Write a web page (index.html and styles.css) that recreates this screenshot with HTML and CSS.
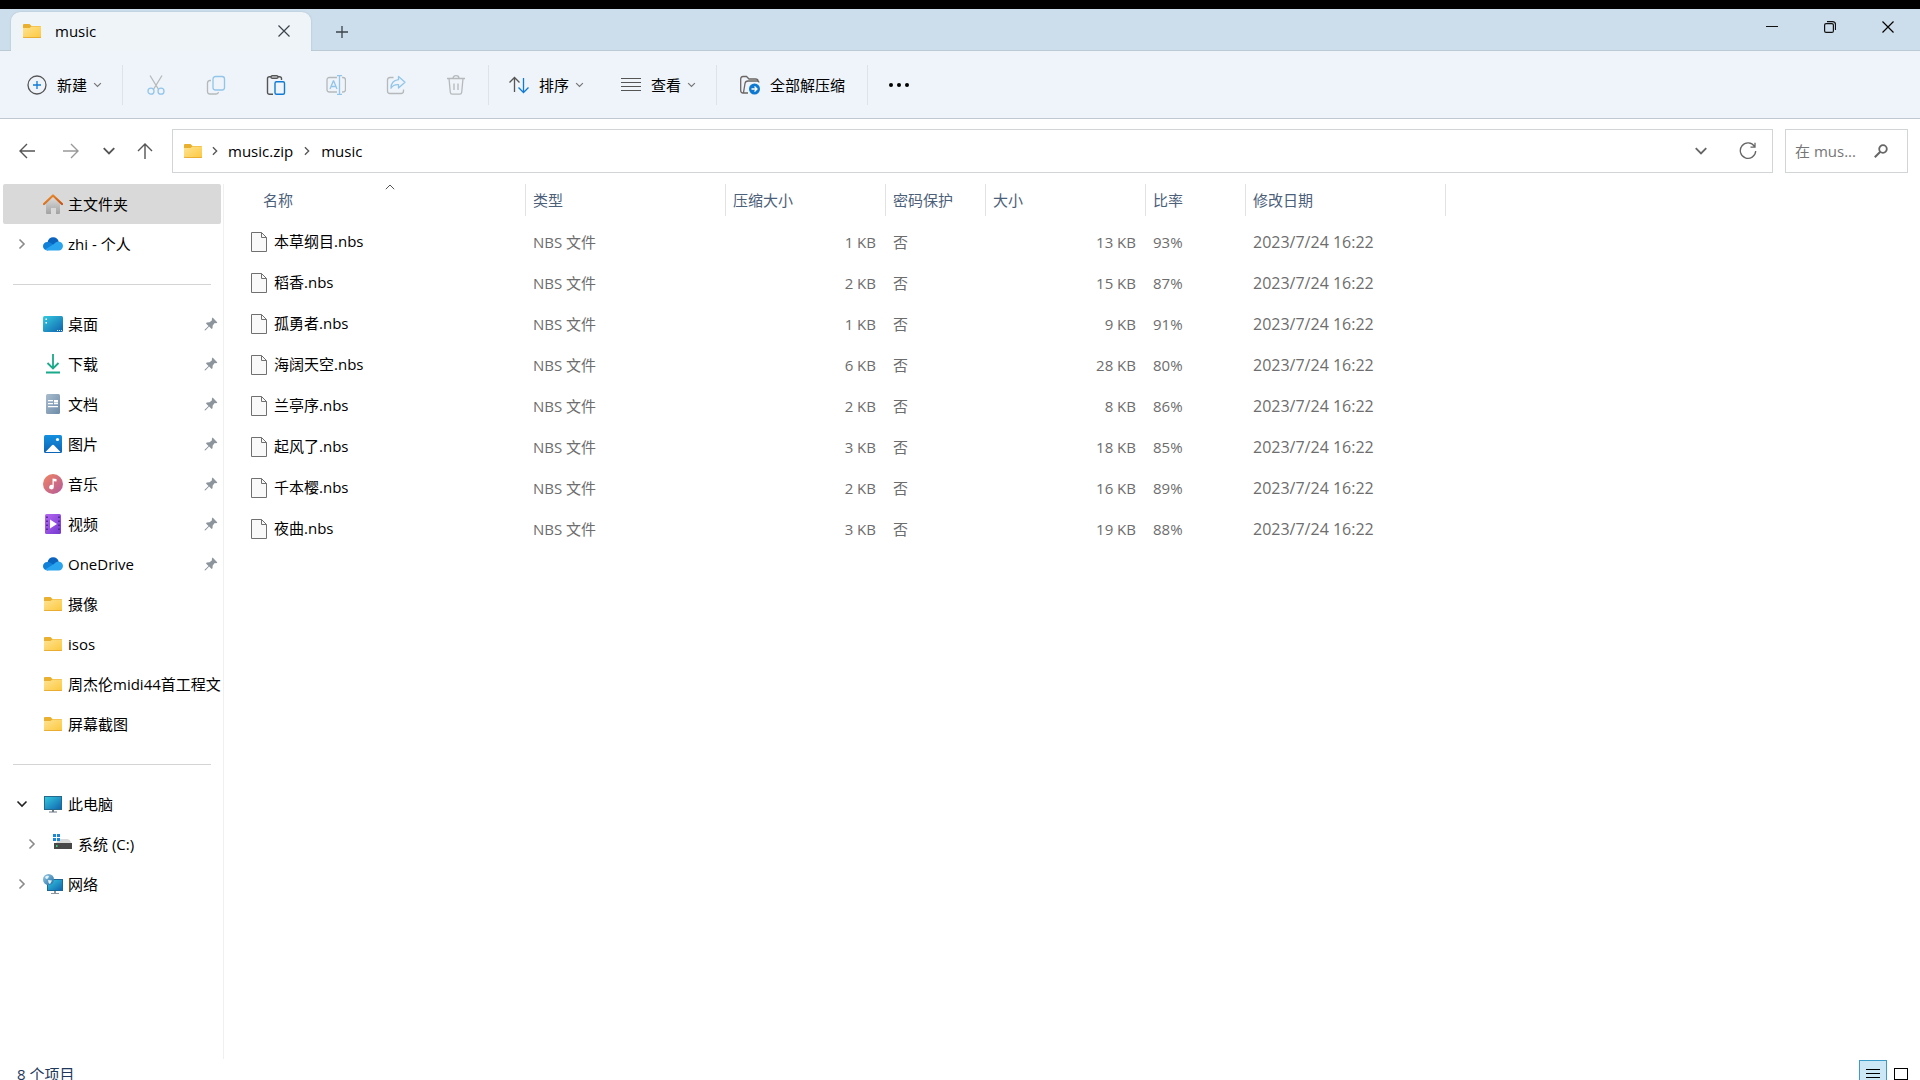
FILE: index.html
```html
<!DOCTYPE html>
<html lang="zh-CN">
<head>
  <meta charset="UTF-8">
  <meta name="viewport" content="width=device-width, initial-scale=1.0">
  <title>music</title>
  <link rel="stylesheet" href="styles.css">
</head>
<body>
  <!-- 图标 -->
  <svg class="defs" width="0" height="0" aria-hidden="true">
    <defs>
      <linearGradient id="gFolder" x1="0" y1="0" x2="1" y2="1">
        <stop offset="0" stop-color="#ffe394"/><stop offset="1" stop-color="#fcc83c"/>
      </linearGradient>
      <linearGradient id="gScreen" x1="0" y1="0" x2="1" y2="1">
        <stop offset="0" stop-color="#35cbe0"/><stop offset="1" stop-color="#0f62ad"/>
      </linearGradient>
      <linearGradient id="gRoof" x1="0" y1="0" x2="1" y2="1">
        <stop offset="0" stop-color="#f0932b"/><stop offset="1" stop-color="#c8500f"/>
      </linearGradient>
      <linearGradient id="gWall" x1="0" y1="0" x2="0" y2="1">
        <stop offset="0" stop-color="#dcdcdc"/><stop offset="1" stop-color="#a2a2a2"/>
      </linearGradient>
      <linearGradient id="gDoc" x1="0" y1="0" x2="1" y2="1">
        <stop offset="0" stop-color="#a9bccd"/><stop offset="1" stop-color="#6d8ba8"/>
      </linearGradient>
      <linearGradient id="gPic" x1="0" y1="0" x2="0" y2="1">
        <stop offset="0" stop-color="#1490df"/><stop offset="1" stop-color="#0b63b5"/>
      </linearGradient>
      <linearGradient id="gMusic" x1="0" y1="0" x2="1" y2="1">
        <stop offset="0" stop-color="#f08560"/><stop offset="1" stop-color="#b35a9c"/>
      </linearGradient>
      <linearGradient id="gVideo" x1="0" y1="0" x2="1" y2="1">
        <stop offset="0" stop-color="#b568f0"/><stop offset="1" stop-color="#7438d0"/>
      </linearGradient>
      <linearGradient id="gGlobe" x1="0" y1="0" x2="1" y2="1">
        <stop offset="0" stop-color="#9ccbe4"/><stop offset="1" stop-color="#1d6fa8"/>
      </linearGradient>
    </defs>
    <symbol id="folder" viewBox="0 0 20 20">
      <path d="M1 4q0-1 1-1h5.500l2 2H18q1 0 1 1v4H1z" fill="#e9b02f"/>
      <path d="M1 7h6.500l2-1.500H19V16q0 1-1 1H2q-1 0-1-1z" fill="url(#gFolder)"/>
      <path d="M1 15.500V16q0 1 1 1h16q1 0 1-1v-.5q-.3.700-1 .700H2q-.7 0-1-.700z" fill="#e2a22a"/>
    </symbol>
    <symbol id="home" viewBox="0 0 20 20">
      <path d="M3 8.500 10 3l7 5.500V19q0 1-1 1h-3v-6H8v6H4q-1 0-1-1z" fill="url(#gWall)"/>
      <path d="M1 10 10 1.500 19 10" fill="none" stroke="url(#gRoof)" stroke-width="2.200" stroke-linecap="round" stroke-linejoin="round"/>
    </symbol>
    <symbol id="cloud" viewBox="0 0 20 20">
      <path d="M4.500 8.500C5 5 7.500 3.200 10.300 3.300c2.700 0 4.800 1.700 5.400 4.200L12 12z" fill="#0a63bd"/>
      <path d="M4.500 16.500A4.300 4.300 0 0 1 0 12.300 4.200 4.200 0 0 1 4.300 8c1.200-.1 2.300.2 3.200.8L14 13z" fill="#1080d8"/>
      <path d="M4.500 16.500 2 15.600l9-5.600c1.200-1.600 2.800-2.500 4.500-2.500 2.500.1 4.500 2 4.500 4.500s-2 4.500-4.300 4.500z" fill="#2ba4f0"/>
    </symbol>
    <symbol id="desktop" viewBox="0 0 20 20">
      <rect x="0" y="2" width="20" height="16" rx="1.500" fill="url(#gScreen)"/>
      <path d="M2.500 4.500h1.500v1.500H2.500zM2.500 8h1.500v1.500H2.500z" fill="#fff"/>
      <path d="M14 16h1v1h-1zM16 16h1v1h-1zM18 16h1v1h-1z" fill="#d5ecfa"/>
    </symbol>
    <symbol id="download" viewBox="0 0 20 20">
      <path d="M10 0v14M4.500 9 10 14.500 15.500 9M3 18.500h14" fill="none" stroke="#19a98b" stroke-width="1.800"/>
    </symbol>
    <symbol id="doc" viewBox="0 0 20 20">
      <rect x="3" y="0" width="14" height="20" rx="1.500" fill="url(#gDoc)"/>
      <path d="M5 6.700h5M5 9.700h5M5 12.700h10M11 9.700h4" stroke="#fff" stroke-width="1.300"/>
      <path d="M11 6h4v2.500h-4z" fill="#fff"/>
    </symbol>
    <symbol id="pic" viewBox="0 0 20 20">
      <rect x="1" y="1" width="18" height="18" rx="1.500" fill="url(#gPic)"/>
      <path d="M2.500 18 9 11.300q1-1 2 0L17.500 18z" fill="#fff"/>
      <circle cx="14.500" cy="5.500" r="1.600" fill="#fff"/>
    </symbol>
    <symbol id="music" viewBox="0 0 20 20">
      <circle cx="10" cy="10" r="10" fill="url(#gMusic)"/>
      <path d="M9.500 4.500 13.500 5v2.500l-2.700-.3V13a2.300 2.300 0 1 1-1.300-2z" fill="#fff"/>
    </symbol>
    <symbol id="video" viewBox="0 0 20 20">
      <rect x="2" y="0" width="16" height="20" rx="1.500" fill="url(#gVideo)"/>
      <path d="M7 5.500 14 10l-7 4.500z" fill="#fff"/>
      <path d="M4 2.500v16M16 2.500v16" stroke="#4a1d94" stroke-width="1.600" stroke-dasharray="1.600 2.400"/>
    </symbol>
    <symbol id="pc" viewBox="0 0 20 20">
      <rect x="1.500" y="2.500" width="17" height="13" fill="url(#gScreen)" stroke="#23698e"/>
      <path d="M9 16h2v1.500h3v1H6v-1h3z" fill="#6c7a84"/>
    </symbol>
    <symbol id="drive" viewBox="0 0 20 20">
      <path d="M3 9.500 5.500 5H14q2 0 3 1.500L19 10H1z" fill="#d9d9d9"/>
      <path d="M1 9h18v6H1z" fill="#484848"/>
      <path d="M3 11h1.500v2H3z" fill="#3fd07c"/>
      <path d="M0 0h3v3H0zM4 0h3v3H4zM0 4h3v3H0zM4 4h3v3H4z" fill="#1b87d6"/>
    </symbol>
    <symbol id="network" viewBox="0 0 20 20">
      <rect x="4.500" y="5.500" width="15" height="11" fill="url(#gScreen)" stroke="#1c6795"/>
      <path d="M11 17h2v2h3v1H8v-1h3z" fill="#8c969d"/>
      <circle cx="5.500" cy="5.500" r="5.500" fill="url(#gGlobe)"/>
      <path d="M2 3q2-2 4-1L5 4.500 3 5zM5 6l4 .5-2 3.500q-2-1-2-4z" fill="#e4f4fb"/>
    </symbol>
    <symbol id="file" viewBox="0 0 16 20">
      <path d="M.5.500h10l5 5v14H.5z" fill="#f9f9f9" stroke="#707070"/>
      <path d="M10.500.500v5h5" fill="none" stroke="#707070"/>
    </symbol>
    <symbol id="pin" viewBox="0 0 14 14">
      <path d="M8.600.6 13.400 5.400 12.200 6.200 10.700 6 8.700 8.400 8.500 11.300 7.600 12 5.100 9.500 1.600 13.200.5 13.500.800 12.400 4.500 8.900 2 6.400 2.700 5.500 5.600 5.300 8 3.300 7.800 1.800z" fill="#8d959c"/>
    </symbol>
    <symbol id="right" viewBox="0 0 10 12">
      <path d="m2.500 1.500 4.500 4.500-4.500 4.500" fill="none" stroke="currentColor" stroke-width="1.600"/>
    </symbol>
    <symbol id="down" viewBox="0 0 12 10">
      <path d="m1.500 2.500 4.500 4.500 4.500-4.500" fill="none" stroke="currentColor" stroke-width="1.600"/>
    </symbol>
    <symbol id="cross" viewBox="0 0 12 12">
      <path d="m.5.500 11 11m0-11-11 11" fill="none" stroke="currentColor" stroke-width="1.200"/>
    </symbol>
  </svg>

  <div class="window">
    <header class="titlebar">
      <div class="tab">
        <svg class="ico"><use href="#folder"/></svg>
        <span class="tab-title">music</span>
        <button class="tab-close" aria-label="关闭标签页"><svg width="12" height="12"><use href="#cross"/></svg></button>
      </div>
      <button class="tab-add" aria-label="新标签页">
        <svg width="12" height="12" viewBox="0 0 12 12"><path d="M6 0v12M0 6h12" stroke="#3b444b" stroke-width="1.300"/></svg>
      </button>
      <div class="controls">
        <button aria-label="最小化"><svg width="12" height="12" viewBox="0 0 12 12"><path d="M0 5.500h12" stroke="#111"/></svg></button>
        <button aria-label="还原">
          <svg width="12" height="12" viewBox="0 0 12 12" fill="none" stroke="#111" stroke-width="1.200"><rect x=".6" y="2.600" width="8.800" height="8.800" rx="1.500"/><path d="M3 .6h5.500q3 0 3 3V9"/></svg>
        </button>
        <button aria-label="关闭"><svg width="12" height="12"><use href="#cross"/></svg></button>
      </div>
    </header>

    <div class="toolbar">
      <button class="btn">
        <svg class="ico" viewBox="0 0 20 20" fill="none"><circle cx="10" cy="10" r="9" stroke="#555" stroke-width="1.300"/><path d="M10 6v8M6 10h8" stroke="#0f7bd4" stroke-width="1.300"/></svg>
        新建
        <svg class="caret"><use href="#down"/></svg>
      </button>
      <span class="sep"></span>
      <button class="icon-btn" aria-label="剪切" disabled>
        <svg class="ico" viewBox="0 0 20 20" fill="none" stroke-width="1.300"><path d="m4 .5 8.300 13.500M16 .5 7.700 14" stroke="#b5b9bc"/><circle cx="5" cy="16.200" r="3" stroke="#93c5ea"/><circle cx="15" cy="16.200" r="3" stroke="#93c5ea"/></svg>
      </button>
      <button class="icon-btn" aria-label="复制" disabled>
        <svg class="ico" viewBox="0 0 20 20" fill="none" stroke-width="1.300"><path d="M5 5.500H4q-2.500 0-2.500 2.500v8.500q0 2.500 2.500 2.500h6q2.200 0 2.500-2" stroke="#b5b9bc"/><rect x="7" y="1.500" width="11.500" height="13.500" rx="2.500" stroke="#93c5ea"/></svg>
      </button>
      <button class="icon-btn" aria-label="粘贴">
        <svg class="ico" viewBox="0 0 20 20" fill="none" stroke-width="1.400"><path d="M7 19.200H3.500q-2 0-2-2V3.500q0-1.800 2-1.800H5M12 1.700h1.500q2 0 2 1.800V5" stroke="#555"/><rect x="5" y=".7" width="7" height="2.600" rx="1.300" stroke="#555"/><rect x="9" y="6.700" width="9.500" height="12.500" rx="1.500" stroke="#0f7bd4"/></svg>
      </button>
      <button class="icon-btn" aria-label="重命名" disabled>
        <svg class="ico" viewBox="0 0 20 20" fill="none" stroke-width="1.300"><path d="M11 2.500H3.500q-2.500 0-2.500 2.500v9.500q0 2.500 2.500 2.500H11M16 2.500h1q2.500 0 2.500 2.500v9.500q0 2.500-2.500 2.500h-1" stroke="#b5b9bc"/><path d="M11 .6h5M11 19.400h5M13.500.6v18.800M4 14 7.300 6h.4L11 14M5.200 11.500h4.600" stroke="#93c5ea"/></svg>
      </button>
      <button class="icon-btn" aria-label="共享" disabled>
        <svg class="ico" viewBox="0 0 20 20" fill="none" stroke-width="1.300" stroke-linejoin="round"><path d="M7.500 2.500H4Q1.500 2.500 1.500 5v11q0 2.500 2.500 2.500h11q2.500 0 2.500-2.500v-1.500" stroke="#b5b9bc"/><path d="M12.500 1.500 19 7.300l-6.500 5.700V9.700q-5-.5-7.500 3.500 0-7.500 7.500-8.500z" stroke="#93c5ea"/></svg>
      </button>
      <button class="icon-btn" aria-label="删除" disabled>
        <svg class="ico" viewBox="0 0 20 20" fill="none" stroke="#b5b9bc" stroke-width="1.300"><path d="M1 3.500h18M7 3.500Q7 .7 10 .7t3 2.800M3 3.500l1.300 13.700q.2 2 2 2h7.400q1.800 0 2-2L17 3.500M8 8.500v6.500M12 8.500v6.500"/></svg>
      </button>
      <span class="sep"></span>
      <button class="btn">
        <svg class="ico" viewBox="0 0 20 20" fill="none" stroke-width="1.300"><path d="M5.500 17V2.500M.5 7.500l5-5 5 5" stroke="#555"/><path d="M14.500 3v14.500M9.500 12.500l5 5 5-5" stroke="#0f7bd4"/></svg>
        排序
        <svg class="caret"><use href="#down"/></svg>
      </button>
      <button class="btn">
        <svg class="ico" viewBox="0 0 20 20"><path d="M0 3.500h20M0 7.500h20M0 11.500h20M0 15.500h20" stroke="#555" stroke-width="1.200"/></svg>
        查看
        <svg class="caret"><use href="#down"/></svg>
      </button>
      <span class="sep"></span>
      <button class="btn extract">
        <svg class="ico" viewBox="0 0 20 20" fill="none"><path d="M8 18H3Q.7 18 .7 15.500V4Q.7 1.500 3 1.500h3.500l2.500 2.500h6.500q2.500 0 2.500 2M3.500 17.500 5 8.500Q5.400 6 8 6h9q2 0 2 1.500" stroke="#6b6663" stroke-width="1.300"/><circle cx="14.500" cy="14" r="5.500" fill="#0f78d0"/><path d="M11.500 14h5.500M14.500 11.500 17 14l-2.500 2.500" stroke="#fff" stroke-width="1.300"/></svg>
        全部解压缩
      </button>
      <span class="sep"></span>
      <button class="more" aria-label="更多">
        <svg class="ico" viewBox="0 0 20 20"><circle cx="2" cy="10" r="2"/><circle cx="10" cy="10" r="2"/><circle cx="18" cy="10" r="2"/></svg>
      </button>
    </div>

    <div class="address-row">
      <button class="nav-btn" aria-label="后退"><svg width="16" height="16" viewBox="0 0 16 16"><path d="M16 8H1M8 1 1 8l7 7" fill="none" stroke="#555" stroke-width="1.400"/></svg></button>
      <button class="nav-btn" aria-label="前进" disabled><svg width="16" height="16" viewBox="0 0 16 16"><path d="M0 8h15M8 1l7 7-7 7" fill="none" stroke="#999" stroke-width="1.400"/></svg></button>
      <button class="nav-btn recent" aria-label="最近浏览的位置"><svg width="14" height="12" viewBox="0 0 12 10"><use href="#down"/></svg></button>
      <button class="nav-btn up" aria-label="上移"><svg width="16" height="16" viewBox="0 0 16 16"><path d="M8 16V1M1 8l7-7 7 7" fill="none" stroke="#555" stroke-width="1.400"/></svg></button>
      <nav class="address">
        <svg class="ico"><use href="#folder"/></svg>
        <svg class="crumb-arrow"><use href="#right"/></svg>
        <a href="#">music.zip</a>
        <svg class="crumb-arrow"><use href="#right"/></svg>
        <a href="#">music</a>
        <button class="history" aria-label="以前的位置"><svg width="14" height="12" viewBox="0 0 12 10"><use href="#down"/></svg></button>
        <button class="refresh" aria-label="刷新"><svg width="18" height="18" viewBox="0 0 18 18"><path d="M15.500 4.500A7.700 7.700 0 1 0 16.700 9M16 .8v4.400h-4.500" fill="none" stroke="#666" stroke-width="1.300"/></svg></button>
      </nav>
      <label class="search">
        <input type="text" placeholder="在 mus..." aria-label="在 music 中搜索">
        <svg width="14" height="14" viewBox="0 0 14 14" fill="none" stroke="#666"><circle cx="9" cy="5" r="3.800" stroke-width="1.800"/><path d="M6.300 7.700.8 13.200" stroke-width="2"/></svg>
      </label>
    </div>

    <div class="main">
      <aside class="sidebar">
        <a class="item active" href="#"><span class="arrow"></span><svg class="ico"><use href="#home"/></svg><span class="name">主文件夹</span></a>
        <a class="item" href="#"><svg class="arrow"><use href="#right"/></svg><svg class="ico"><use href="#cloud"/></svg><span class="name">zhi - 个人</span></a>
        <hr>
        <a class="item" href="#"><span class="arrow"></span><svg class="ico"><use href="#desktop"/></svg><span class="name">桌面</span><svg class="pin"><use href="#pin"/></svg></a>
        <a class="item" href="#"><span class="arrow"></span><svg class="ico"><use href="#download"/></svg><span class="name">下载</span><svg class="pin"><use href="#pin"/></svg></a>
        <a class="item" href="#"><span class="arrow"></span><svg class="ico"><use href="#doc"/></svg><span class="name">文档</span><svg class="pin"><use href="#pin"/></svg></a>
        <a class="item" href="#"><span class="arrow"></span><svg class="ico"><use href="#pic"/></svg><span class="name">图片</span><svg class="pin"><use href="#pin"/></svg></a>
        <a class="item" href="#"><span class="arrow"></span><svg class="ico"><use href="#music"/></svg><span class="name">音乐</span><svg class="pin"><use href="#pin"/></svg></a>
        <a class="item" href="#"><span class="arrow"></span><svg class="ico"><use href="#video"/></svg><span class="name">视频</span><svg class="pin"><use href="#pin"/></svg></a>
        <a class="item" href="#"><span class="arrow"></span><svg class="ico"><use href="#cloud"/></svg><span class="name">OneDrive</span><svg class="pin"><use href="#pin"/></svg></a>
        <a class="item" href="#"><span class="arrow"></span><svg class="ico"><use href="#folder"/></svg><span class="name">摄像</span></a>
        <a class="item" href="#"><span class="arrow"></span><svg class="ico"><use href="#folder"/></svg><span class="name">isos</span></a>
        <a class="item" href="#"><span class="arrow"></span><svg class="ico"><use href="#folder"/></svg><span class="name">周杰伦midi44首工程文</span></a>
        <a class="item" href="#"><span class="arrow"></span><svg class="ico"><use href="#folder"/></svg><span class="name">屏幕截图</span></a>
        <hr>
        <a class="item" href="#"><svg class="arrow open"><use href="#down"/></svg><svg class="ico"><use href="#pc"/></svg><span class="name">此电脑</span></a>
        <a class="item child" href="#"><svg class="arrow"><use href="#right"/></svg><svg class="ico"><use href="#drive"/></svg><span class="name">系统 (C:)</span></a>
        <a class="item" href="#"><svg class="arrow"><use href="#right"/></svg><svg class="ico"><use href="#network"/></svg><span class="name">网络</span></a>
      </aside>

      <section class="content">
        <table class="files">
          <colgroup>
            <col class="c-name"><col class="c-type"><col class="c-packed"><col class="c-lock"><col class="c-size"><col class="c-ratio"><col class="c-date">
          </colgroup>
          <thead>
            <tr>
              <th><button class="sorted">名称<svg class="sort" viewBox="0 0 10 6"><path d="m.8 5.200 4.200-4.200 4.200 4.200" fill="none" stroke="#555"/></svg></button></th>
              <th><button>类型</button></th>
              <th><button>压缩大小</button></th>
              <th><button>密码保护</button></th>
              <th><button>大小</button></th>
              <th><button>比率</button></th>
              <th><button>修改日期</button></th>
            </tr>
          </thead>
          <tbody>
            <tr><td><svg class="file"><use href="#file"/></svg>本草纲目.nbs</td><td>NBS 文件</td><td class="num">1 KB</td><td>否</td><td class="num">13 KB</td><td>93%</td><td class="date">2023/7/24 16:22</td></tr>
            <tr><td><svg class="file"><use href="#file"/></svg>稻香.nbs</td><td>NBS 文件</td><td class="num">2 KB</td><td>否</td><td class="num">15 KB</td><td>87%</td><td class="date">2023/7/24 16:22</td></tr>
            <tr><td><svg class="file"><use href="#file"/></svg>孤勇者.nbs</td><td>NBS 文件</td><td class="num">1 KB</td><td>否</td><td class="num">9 KB</td><td>91%</td><td class="date">2023/7/24 16:22</td></tr>
            <tr><td><svg class="file"><use href="#file"/></svg>海阔天空.nbs</td><td>NBS 文件</td><td class="num">6 KB</td><td>否</td><td class="num">28 KB</td><td>80%</td><td class="date">2023/7/24 16:22</td></tr>
            <tr><td><svg class="file"><use href="#file"/></svg>兰亭序.nbs</td><td>NBS 文件</td><td class="num">2 KB</td><td>否</td><td class="num">8 KB</td><td>86%</td><td class="date">2023/7/24 16:22</td></tr>
            <tr><td><svg class="file"><use href="#file"/></svg>起风了.nbs</td><td>NBS 文件</td><td class="num">3 KB</td><td>否</td><td class="num">18 KB</td><td>85%</td><td class="date">2023/7/24 16:22</td></tr>
            <tr><td><svg class="file"><use href="#file"/></svg>千本樱.nbs</td><td>NBS 文件</td><td class="num">2 KB</td><td>否</td><td class="num">16 KB</td><td>89%</td><td class="date">2023/7/24 16:22</td></tr>
            <tr><td><svg class="file"><use href="#file"/></svg>夜曲.nbs</td><td>NBS 文件</td><td class="num">3 KB</td><td>否</td><td class="num">19 KB</td><td>88%</td><td class="date">2023/7/24 16:22</td></tr>
          </tbody>
        </table>
      </section>
    </div>

    <footer class="status">
      <span class="count">8 个项目</span>
      <button class="view on" aria-label="详细信息"><svg width="14" height="10" viewBox="0 0 14 10"><path d="M0 .5h14M0 4.500h14M0 8.500h14" stroke="#000"/></svg></button>
      <button class="view" aria-label="大缩略图"><svg width="14" height="12" viewBox="0 0 14 12"><rect x=".5" y=".5" width="13" height="11" fill="#fff" stroke="#000"/></svg></button>
    </footer>
  </div>
</body>
</html>
```
FILE: styles.css
```css
html {
  overflow: hidden;
}
body {
  margin: 0;
  background: #fff;
  color: #000;
  font: 15px/20px "Open Sans", "Noto Sans CJK SC", sans-serif;
}
a {
  text-decoration: none;
  color: #000;
}
button {
  margin: 0;
  padding: 0;
  border: 0;
  background: none;
  font: inherit;
  color: inherit;
  display: flex;
  align-items: center;
  justify-content: center;
}
svg {
  flex: none;
}
.defs {
  position: absolute;
}
.ico {
  width: 20px;
  height: 20px;
}
.window {
  height: calc(100vh + 9px);
  box-sizing: border-box;
  border-top: 9px solid #000;
  display: flex;
  flex-direction: column;
}

/* 标题栏 */
.titlebar {
  height: 42px;
  box-sizing: border-box;
  display: flex;
  background: #ccdeeb;
  box-shadow: inset 0 -1px #bccad4;
  padding: 3px 3px 0 11px;
}
.tab {
  width: 300px;
  box-sizing: border-box;
  padding: 0 21px 2px 11px;
  display: flex;
  align-items: center;
  background: #eff4f9;
  border-radius: 9px 9px 0 0;
  box-shadow: 0 0 2px #a9bccb;
  clip-path: inset(-3px -3px 0 -3px);
}
.tab-title {
  flex: 1;
  margin-left: 13px;
  font-weight: 500;
}
.tab-close {
  color: #3b444b;
}
.tab-add {
  width: 62px;
}
.controls {
  margin: -3px 0 0 auto;
  height: 36px;
  display: flex;
}
.controls button {
  width: 58px;
}

/* 工具栏 */
.toolbar {
  height: 68px;
  box-sizing: border-box;
  padding-left: 12px;
  display: flex;
  align-items: center;
  background: #eef4f9;
  border-bottom: 1px solid #bfc8cf;
}
.btn {
  height: 40px;
  padding: 0 18px 0 15px;
  gap: 10px;
}
.btn + .btn, .extract {
  margin-left: 4px;
}
.caret {
  width: 9px;
  height: 8px;
  margin-left: -4px;
  color: #777;
}
.icon-btn {
  width: 60px;
  height: 40px;
}
.sep {
  width: 1px;
  height: 40px;
  margin: 0 3px 0 2px;
  background: #dde3e8;
}
.extract + .sep {
  margin-left: 4px;
}
.sep + .btn {
  padding-left: 17px;
}
.sep + .extract {
  padding-left: 16px;
}
.more {
  width: 55px;
  height: 40px;
}

/* 地址栏 */
.address-row {
  display: flex;
  padding: 10px 12px 11px 5px;
}
.nav-btn {
  width: 44px;
  height: 44px;
  color: #555;
}
.recent {
  width: 32px;
}
.up {
  width: 40px;
  margin-right: 7px;
}
.address {
  flex: 1;
  height: 44px;
  box-sizing: border-box;
  border: 1px solid #d2d5d7;
  padding: 0 15px 1px 10px;
  display: flex;
  align-items: center;
}
.crumb-arrow {
  width: 10px;
  height: 10px;
  margin: 0 8px 0 7px;
  color: #555;
}
.crumb-arrow ~ .crumb-arrow {
  margin: 0 9px;
}
.history {
  margin-left: auto;
  width: 40px;
  color: #666;
}
.refresh {
  width: 18px;
  margin-left: 18px;
}
.search {
  width: 123px;
  box-sizing: border-box;
  margin-left: 12px;
  border: 1px solid #d2d5d7;
  padding: 0 19px 0 9px;
  display: flex;
  align-items: center;
}
.search input {
  flex: 1;
  min-width: 0;
  border: 0;
  padding: 0;
  outline: none;
  font: inherit;
}
.search input::placeholder {
  color: #767676;
}

/* 左侧导航 */
.main {
  flex: 1;
  min-height: 0;
  display: flex;
}
.sidebar {
  width: 224px;
  box-sizing: border-box;
  padding: 0 2px 0 3px;
  border-right: 1px solid #f0f0f0;
}
.item {
  height: 40px;
  padding: 0 3px 0 14px;
  display: flex;
  align-items: center;
}
.active {
  background: #d9d9d9;
  border-radius: 2px;
}
.arrow {
  width: 10px;
  height: 12px;
  margin-right: 16px;
  color: #8a8a8a;
}
.arrow.open {
  width: 12px;
  height: 10px;
  margin-left: -1px;
  margin-right: 15px;
  color: #222;
}
.name {
  flex: 1;
  margin-left: 5px;
  margin-right: -3px;
  white-space: nowrap;
  overflow: hidden;
}
.pin {
  width: 14px;
  height: 14px;
}
.child {
  padding-left: 24px;
}
.sidebar hr {
  height: 1px;
  border: 0;
  margin: 20px 10px 19px;
  background: #d4d4d4;
}

/* 文件列表 */
.content {
  flex: 1;
  padding-left: 17px;
}
.files {
  width: 1205px;
  table-layout: fixed;
  border-collapse: collapse;
}
.c-name {
  width: 285px;
}
.c-type, .c-date {
  width: 200px;
}
.c-packed, .c-size {
  width: 160px;
}
.c-lock, .c-ratio {
  width: 100px;
}
.files th {
  padding: 0 0 5px;
  font-weight: normal;
}
.files th button {
  position: relative;
  width: 100%;
  height: 32px;
  padding-left: 7px;
  justify-content: flex-start;
  border-right: 1px solid #e2e2e2;
  color: #4c607a;
}
.files th .sorted {
  padding-left: 22px;
}
.sort {
  position: absolute;
  top: 0;
  right: 130px;
  width: 10px;
  height: 6px;
}
.files td {
  height: 41px;
  padding: 0 10px 0 7px;
  color: #6d6d6d;
  white-space: nowrap;
}
.files td:first-child {
  padding-left: 10px;
  color: #000;
}
.files .num {
  text-align: right;
}
.files .date {
  font-size: 16px;
}
.file {
  width: 16px;
  height: 20px;
  margin-right: 7px;
  vertical-align: middle;
}

/* 状态栏 */
.status {
  height: 30px;
  padding: 0 5px 0 17px;
  display: flex;
  align-items: center;
  color: #1e395b;
}
.count {
  margin-right: auto;
}
.view {
  width: 28px;
  height: 28px;
  box-sizing: border-box;
}
.on {
  background: #cce8f6;
  border: 1px solid #3c9bc9;
}
```
